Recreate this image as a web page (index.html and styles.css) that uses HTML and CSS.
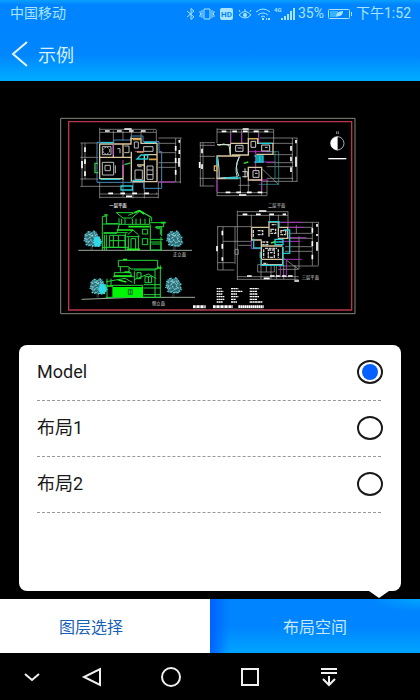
FILE: index.html
```
<!DOCTYPE html>
<html lang="zh-CN">
  <head>
    <meta charset="utf-8">
    <meta name="viewport" content="width=device-width, initial-scale=1">
    <title>示例</title>
    <link rel="stylesheet" href="styles.css">
  </head>
  <body>
    <header class="header">
      <div class="status-bar">
        <span class="carrier">中国移动</span>
        <svg width="8" height="12" viewBox="0 0 8 12" class="line"><path d="M0 3l7 6-3 2.500V.5L7 3 0 9"/></svg>
        <svg width="16" height="12" viewBox="0 0 16 12" class="line"><path d="M5 1h6v10H5zM3 2v8M13 2v8M1 3v2l1 1-1 1v2M15 3v2l-1 1 1 1v2"/></svg>
        <svg width="15" height="12" viewBox="0 0 15 12"><rect x="1" width="13" height="12" rx="2" class="fill"/><text x="7.500" y="9" text-anchor="middle" class="hd">HD</text></svg>
        <svg width="14" height="12" viewBox="0 0 14 12" class="line"><path d="M1 7q6-7 12 0-6 6-12 0zM2 4L1 2M7 3V1M12 4l1-2"/><circle cx="7" cy="7" r="2" class="fill"/></svg>
        <svg width="14" height="12" viewBox="0 0 14 12" class="line"><path d="M0 4q7-6 14 0M2 7q5-4 10 0M5 9q2-2 4 0"/><path d="M6 10h2v2H6zM10 10h1v2h-1zM12 10h2v2h-2z" class="fill"/></svg>
        <svg width="20" height="12" viewBox="0 0 20 12"><text x="0" y="4" class="net">4G</text><path d="M7 10h2v2H7zM10 8h2v4h-2zM13 6h2v6h-2zM16 3h2v9h-2zM19 0h2v12h-2z" class="fill"/></svg>
        <span>35%</span>
        <svg width="24" height="12" viewBox="0 0 24 12"><rect x=".5" y="1.500" width="21" height="9" rx="1" class="line"/><path d="M2 3h8v6H2z" class="charge"/><path d="M8 9q0-6 7-6 0 6-6 5zM23 4h1v4h-1z" class="fill"/></svg>
        <span>下午1:52</span>
      </div>
      <div class="title-bar">
        <a href="#" class="back" aria-label="返回">
          <svg width="16" height="26" viewBox="0 0 16 26"><path d="M15 1L1 13l14 12"/></svg>
        </a>
        <h1>示例</h1>
      </div>
    </header>

    <main class="viewer">
      <svg class="drawing" viewBox="0 0 900 591" fill="none">
        <defs>
          <g id="tree">
            <path d="M24 60V28M28 60V34M24 44L10 28M26 40l14-18M24 30V8M16 34l-12-2M32 32l14-2" stroke="#8aa"/>
            <path d="M6 16l6-8 8-4 4 6 8-6 8 4 2 8 6 6-2 8 4 8-6 6-4 6-6-4-4 4-6-8-6 6-8-4 2-8-8-4 2-8z" fill="#2d6f78" stroke="#5fc6d0" stroke-width="5" stroke-dasharray="5 2 2 3"/>
            <path d="M10 18l8-6 8 6 8-6 6 8-6 8 6 6-10 4-6-8-8 6-6-8 10-4 4-8 10 6" stroke="#8fd0d8" stroke-width="4" stroke-dasharray="4 3 2 2"/>
          </g>
        </defs>

        <!-- sheet frame -->
        <path d="M2 1h883v586H2z" stroke="#8a8478" stroke-width="3"/>
        <path d="M26 11h849v565H26z" stroke="#b8374a" stroke-width="4"/>

        <!-- ground floor -->
        <g transform="translate(-15 -24)">
          <g stroke="#aaa" stroke-width="2">
            <path d="M134 58h170M134 67h170M134 53v50M175 62v38M204 62v30M229 62v30M258 62v22M304 60v40"/>
            <path d="M81 99v130M90 99v108M76 99h54M76 142h54M76 207h54M76 229h130"/>
            <path d="M134 215v50M204 210v50M234 215v50M268 215v50M310 215v50M134 252h176M134 262h176"/>
            <path d="M310 84h70M310 100h52M310 128h52M310 158h65M310 172h52M310 216h68M362 84v132M376 84v136"/>
          </g>
          <g stroke="#fff" stroke-width="5" stroke-dasharray="14 22">
            <path d="M150 63h145M160 250h145M362 108v100M90 112v90"/>
            <path d="M208 57h22M213 259h18M81 153v22M373 90v8M373 120v12M372 144v26" stroke-dasharray="none"/>
          </g>
          <path d="M126 97h50v-7h52V78h36v17h48v30h8v110h-54v-18H126z" stroke="#48b" stroke-width="3"/>
          <path d="M134 102h94V85h30v15h48v115H232M134 102v104h68M134 142h70v-40M175 102v40h54M229 125v90M268 134v81M204 165v45M246 165h22M268 134h36" stroke="#d9c7a0" stroke-width="4"/>
          <path d="M175 102v34M204 150v48M310 216h50M240 125h28" stroke="#c03cc8" stroke-width="3"/>
          <path d="M137 98h38M268 97h35M137 208h60M232 211h35M246 147h32v-12h-20zM198 228h34v12h-34z" stroke="#24cbd8" stroke-width="4"/>
          <path d="M233 88h24M282 148h25M246 126h20" stroke="#e0a44c" stroke-width="5"/>
          <path d="M129 160h-9v28h10M208 164l18-5" stroke="#35c04b" stroke-width="4"/>
          <g stroke="#bbb" stroke-width="3">
            <circle cx="154" cy="122" r="10" stroke-dasharray="5 3"/>
            <path d="M142 110h26v24h-26zM142 157h34v38h-34zM150 166h16v16h-16zM181 166v24M187 116h8v14M208 108h14v20h-14M238 96h12v18h-12zM266 110h28v14h-28zM276 168h18v40h-18zM276 180h18M276 194h18M240 180h22v28h-22zM248 170h12"/>
          </g>
          <text x="163" y="292">一层平面</text>
        </g>

        <!-- first floor -->
        <g transform="translate(405 -24)">
          <g stroke="#aaa" stroke-width="2">
            <path d="M66 58h170M66 66h170M66 55v45M107 60v38M140 60v40M160 60v28M191 60v30M236 58v42"/>
            <path d="M16 98v130M24 98v130M14 98h46M14 106h46M14 139h46M14 205h46M14 228h44"/>
            <path d="M66 210v48M136 200v50M160 210v40M200 210v46M216 210v46M66 248h150M66 257h150M130 226h35"/>
            <path d="M195 84h112M215 100h80M234 134h60M215 158h80M215 170h80M215 205h80M200 214h108M292 84v130M306 84v130M203 178l48 46"/>
          </g>
          <g stroke="#fff" stroke-width="5" stroke-dasharray="14 18">
            <path d="M80 64h140M92 247h120M288 108v90M21 116v16M21 163v18"/>
            <path d="M143 57h18M132 255h22M303 90v10M303 140v30M14 156v18" stroke-dasharray="none"/>
          </g>
          <path d="M107 70v34M140 70v30M191 70v30M66 200v46M160 125h70M180 156h60M170 210h50M182 120v60M200 214v28" stroke="#b02cc0" stroke-width="3"/>
          <path d="M215 125h36v98h-60M240 125v82" stroke="#37a3a3" stroke-width="2"/>
          <path d="M66 104h40v34H66v68h64M106 100h54V86h28v14h46v33h-50M110 135h50v-35M160 172h40v38h-40zM66 138h70" stroke="#d9c7a0" stroke-width="4"/>
          <path d="M68 142q6 40 4 62l55-3q-10-25 6-60M132 142q-15 28 0 57M70 106q16-8 32 0l4 28" stroke="#bceaea" stroke-width="3"/>
          <path d="M178 138h26v18h-26M182 144h20M182 150h20M194 137v20M67 140v28M92 204h44M192 100h38" stroke="#1bd0dc" stroke-width="4"/>
          <path d="M58 168h8v14h-8zM161 86h26" stroke="#c9a75c" stroke-width="4"/>
          <path d="M146 160l14-4" stroke="#3d3" stroke-width="4"/>
          <path d="M122 106h22v18h-22zM128 114h12M168 94h14v18h-14zM200 105h24v18h-24zM210 112h8M174 182h18v20h-18zM180 190h8M150 175v28M142 185h15v15h-15" stroke="#ccc" stroke-width="3"/>
          <!-- north arrow -->
          <circle cx="427" cy="100" r="20" stroke="#aaa" stroke-width="3"/>
          <path d="M427 80a20 20 0 0 0 0 40z" fill="#fff"/>
          <path d="M427 78v44M425 64v8M430 64v8" stroke="#ddd" stroke-width="2"/>
          <path d="M400 146h54" stroke="#fff" stroke-width="4"/>
          <text x="219" y="291">二层平面</text>
        </g>

        <!-- elevations -->
        <g transform="translate(-15 246)">
          <path d="M70 151h341M80 298l160-6h180" stroke="#9a9" stroke-width="3"/>
          <g stroke="#20d83a" stroke-width="3">
            <path d="M142 150V50l12-2v23h35M184 38l20 16h26l26-22 34 22v10M184 38h50M220 46l34-14 36 20M192 55v18h92V54M200 56v16M210 56v16M232 56v16M243 56v16M256 56v16M270 56v16M143 72h50l-8 28h-40M146 98h72M148 104v46M164 106h46v36h-46zM175 106v36M190 106v36M164 122h46M211 100v50M154 104v46M218 104l16-14 16 14M214 110h40M220 112v38M228 116h14v34h-14zM250 106v44M286 74v74M262 116h16v18h-16zM262 88h16v14h-16zM286 68h40v12h-24M300 82h20v26M304 86h12v18M284 118h40M286 126h32v24h-32zM290 132h26M318 110v40M142 142h80"/>
            <path d="M186 90h48M220 80h64M215 148h40M238 38l14-6 16 10M148 45h10M318 68h14" stroke="#20f020" stroke-width="5"/>
            <path d="M190 181h118v26H228l-8-7h-30zM196 201v14M222 202v18M178 218h50v10h-50zM174 230h62M168 236v22M156 236v56M154 245l56-10 22 12M238 210h60l14-10M238 214v38M300 208v84M316 196v96M246 218h12v18h-12zM240 238l40-16 24 14M270 230h20v18h-20zM280 230v18M266 254h50M266 264h50M266 284h50M262 258v34M172 256h92M152 292h164"/>
            <path d="M178 228h52M208 216h16M204 178h12M308 204h12M190 240l24 6M154 258h20" stroke="#1ef01e" stroke-width="4"/>
          </g>
          <path d="M172 261h92v30h-92z" fill="#02f505"/>
          <path d="M220 269h12v14h-12zM226 269v14" stroke="#063" stroke-width="3"/>
          <use href="#tree" x="84" y="90"/>
          <use href="#tree" x="332" y="90"/>
          <use href="#tree" x="102" y="233"/>
          <use href="#tree" x="329" y="230"/>
          <path d="M118 112l14-2 8 16-6 14-14-2-4-12zM136 252l14 2 6 14-8 14-12-2-6-14z" fill="#2fd8e4" stroke="#2fd8e4" stroke-width="3" stroke-dasharray="4 3"/>
          <text x="163" y="22">一层平面</text>
          <text x="354" y="167">正立面</text>
          <text x="291" y="314">侧立面</text>
        </g>

        <!-- roof floor and schedule -->
        <g transform="translate(405 246)">
          <g stroke="#aaa" stroke-width="2">
            <path d="M127 35h152M127 46h152M127 32v50M169 44v36M224 44v22M250 44v22M279 34v46"/>
            <path d="M68 80v130M84 80v130M66 80h105M84 124h86M68 188h50M68 210h50M120 80v112M120 148h10v15h-10zM130 136h40"/>
            <path d="M127 82v158M198 195v42M228 195v42M244 195v42M266 195v42M300 195v45M127 230h184M127 238h184M188 194h50v22h-50zM214 194v22M265 174l46 34"/>
            <path d="M250 67h122M280 82h72M280 100h72M280 115h72M270 140h82M270 154h82M250 198h120M352 67v130M370 67v130M304 76v24M312 108v100M250 208h60"/>
          </g>
          <g stroke="#fff" stroke-width="5" stroke-dasharray="14 26">
            <path d="M143 43h130M156 228h36M82 92v90M352 84v100"/>
            <path d="M192 33h22M206 235h18M66 138v16M366 72v8M366 102v6M366 126v26M298 243h14" stroke-dasharray="none"/>
            <path d="M225 228h68" stroke-dasharray="14 4"/>
          </g>
          <path d="M169 82v64h30M250 67h70M278 82h50M280 113h54M256 124h60M265 178h55M256 194v36M274 182v46" stroke="#a534b8" stroke-width="3"/>
          <path d="M170 82h52V66h28v16h28v33h-30M170 82v38h30M199 122v72h64v-52M222 82v28M250 82v30M199 138h64M199 178h64" stroke="#d9c7a0" stroke-width="4"/>
          <path d="M220 65h32v18M199 178v18h65v-18M240 118h24v16h-24zM240 126h24M264 140v54M196 155v20M176 116v28h22M266 90h18v70h-18" stroke="#22c8d0" stroke-width="4"/>
          <path d="M228 129l12-4" stroke="#3e3" stroke-width="5"/>
          <path d="M175 90v20M188 92h15v12h-15M230 74h14M228 88h14v12h-14zM258 92h14v12h-14zM206 148v25M250 148v25M220 150h18v22h-18zM225 158h8M210 145h36M202 126h16v8h-16M205 190h12" stroke="#ccc" stroke-width="4" stroke-dasharray="9 2"/>
          <g stroke="#fff" stroke-width="4">
            <path d="M65 266h15M65 274h20M65 282h18M65 290h24M65 298h24M65 306h19" stroke-dasharray="5 1"/>
            <path d="M108 266h22M108 274h34M108 282h18M108 290h22M108 298h15M108 306h18" stroke-dasharray="6 1"/>
            <path d="M164 266h27M164 274h22M164 282h24M164 290h28M164 298h22M164 306h38" stroke-dasharray="7 1"/>
            <path d="M-6 320h38M54 320h60M130 320h76" stroke-width="8" stroke-dasharray="7 1 3 1"/>
          </g>
          <path d="M54 327h152M-6 327h38" stroke="#777" stroke-width="2"/>
          <text x="320" y="238">三层平面</text>
        </g>
      </svg>

      <form class="panel">
        <label class="option">Model<input type="radio" name="layout" value="model" checked></label>
        <label class="option">布局1<input type="radio" name="layout" value="1"></label>
        <label class="option">布局2<input type="radio" name="layout" value="2"></label>
      </form>
    </main>

    <div class="tabs">
      <button type="button" class="tab">图层选择</button>
      <button type="button" class="tab active">布局空间</button>
    </div>

    <nav class="nav-bar">
      <a href="#" aria-label="隐藏"><svg width="20" height="20" viewBox="0 0 20 20"><path d="M3 7l7 6 7-6"/></svg></a>
      <a href="#" aria-label="返回"><svg width="20" height="20" viewBox="0 0 20 20"><path d="M18 2v16L2 10z"/></svg></a>
      <a href="#" aria-label="主页"><svg width="20" height="20" viewBox="0 0 20 20"><circle cx="10" cy="10" r="9"/></svg></a>
      <a href="#" aria-label="最近"><svg width="20" height="20" viewBox="0 0 20 20"><path d="M2 2h16v16H2z"/></svg></a>
      <a href="#" aria-label="通知"><svg width="20" height="20" viewBox="0 0 20 20"><path d="M2 2h16M2 6h16M10 9v9M4 12l6 6 6-6"/></svg></a>
    </nav>
  </body>
</html>
```
FILE: styles.css
```
* {
  box-sizing: border-box;
  margin: 0;
  padding: 0;
}
body {
  display: flex;
  flex-direction: column;
  min-height: 100vh;
  background-color: #000;
  font-family: Roboto, "Noto Sans CJK SC", sans-serif;
}
svg {
  display: block;
  flex-shrink: 0;
  overflow: visible;
}

/* header */
.header {
  color: #fff;
  background: linear-gradient(#0aa0ff 0, #0083ff 5px, #0086ff 55px, #00adff 100%);
}
.status-bar {
  display: flex;
  align-items: center;
  gap: 4px;
  height: 27px;
  padding: 0 9px 0 10px;
  font-size: 14px;
  line-height: 27px;
  white-space: nowrap;
  color: #a8e4ff;
}
.carrier {
  margin-right: auto;
}
.line {
  fill: none;
  stroke: #a8e4ff;
}
.fill {
  fill: #a8e4ff;
  stroke: none;
}
.charge {
  fill: #35b4ff;
}
.hd {
  font-size: 8px;
  font-weight: bold;
  fill: #0083ff;
}
.net {
  font-size: 6px;
  font-weight: bold;
  fill: #a8e4ff;
}
.title-bar {
  display: flex;
  align-items: center;
  gap: 10px;
  height: 54px;
  padding: 0 12px;
}
.title-bar h1 {
  font-size: 18px;
  font-weight: 400;
  color: #d8f0ff;
}
.back path {
  fill: none;
  stroke: #e4f5ff;
  stroke-width: 2;
}

/* drawing and layout list */
.viewer {
  flex: 1;
  display: flex;
  flex-direction: column;
  align-items: center;
  gap: 30px;
  padding: 37px 19px 8px;
}
.drawing {
  width: 300px;
  max-width: 100%;
}
.drawing text {
  font-size: 13px;
  fill: #ddd;
}
.panel {
  position: relative;
  flex: 1;
  width: 100%;
  min-height: 200px;
  padding: 0 20px 0 18px;
  border-radius: 8px;
  background-color: #fff;
}
.panel::after {
  content: "";
  position: absolute;
  right: 12px;
  top: 100%;
  width: 20px;
  height: 7px;
  background-color: #fff;
  clip-path: polygon(0 0, 100% 0, 50% 100%);
}
.option {
  display: flex;
  justify-content: space-between;
  align-items: center;
  height: 56px;
  padding-bottom: 2px;
  border-bottom: 1px dashed #999;
  font-size: 18px;
  line-height: 20px;
  color: #1a1a1a;
}
.option input {
  appearance: none;
  display: grid;
  place-items: center;
  width: 26px;
  height: 24px;
  margin-right: -2px;
  border: 2px solid #1a1a1a;
  border-radius: 50%;
}
.option input:checked::before {
  content: "";
  width: 16px;
  height: 16px;
  border-radius: 50%;
  background-color: #0560ff;
}

/* bottom tabs */
.tabs {
  display: flex;
  height: 54px;
}
.tab {
  width: 50%;
  border: none;
  background-color: #fff;
  font-family: inherit;
  font-size: 16px;
  color: #1560b8;
}
.tab:first-child {
  padding-right: 28px;
}
.tab.active {
  color: #c4e8ff;
  background: linear-gradient(90deg, #0062ff, transparent 20px),
    radial-gradient(ellipse at 100% 0, #00a4ff, transparent 50px),
    linear-gradient(#0084ff 50%, #00a4ff);
}

/* system navigation */
.nav-bar {
  display: grid;
  grid-template-columns: 40fr 79fr 79fr 79fr 79fr;
  align-items: center;
  height: 47px;
  padding: 0 52px 0 12px;
}
.nav-bar a {
  display: flex;
  justify-content: center;
}
.nav-bar path,
.nav-bar circle {
  fill: none;
  stroke: #f0f0f0;
  stroke-width: 2;
}
```
